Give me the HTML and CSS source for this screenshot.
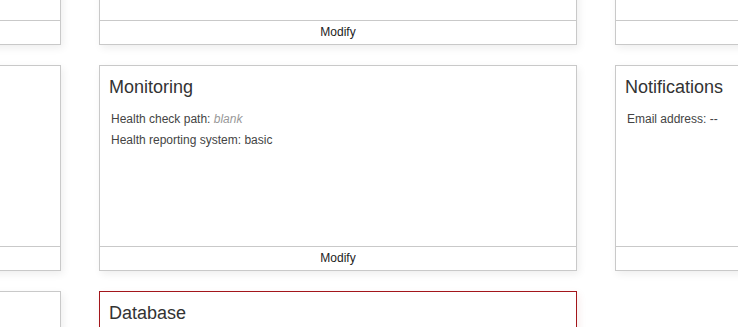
FILE: index.html
```html
<!DOCTYPE html>
<html lang="en">
<head>
  <meta charset="UTF-8" />
  <meta name="viewport" content="width=device-width, initial-scale=1.0"/>
  <title>Configuration</title>
  <link rel="stylesheet" href="styles.css">
</head>
<body>
  <div class="board">
    <!-- row 1 -->
    <div class="card">
      <div class="card-body"></div>
      <div class="card-footer">Modify</div>
    </div>
    <div class="card">
      <div class="card-body"></div>
      <div class="card-footer">Modify</div>
    </div>
    <div class="card">
      <div class="card-body"></div>
      <div class="card-footer">Modify</div>
    </div>

    <!-- row 2 -->
    <div class="card">
      <div class="card-body"></div>
      <div class="card-footer">Modify</div>
    </div>
    <div class="card">
      <div class="card-body">
        <h2>Monitoring</h2>
        <div class="setting">Health check path: <span class="blank">blank</span></div>
        <div class="setting">Health reporting system: basic</div>
      </div>
      <div class="card-footer">Modify</div>
    </div>
    <div class="card">
      <div class="card-body">
        <h2>Notifications</h2>
        <div class="setting">Email address: --</div>
      </div>
      <div class="card-footer">Modify</div>
    </div>

    <!-- row 3 -->
    <div class="card">
      <div class="card-body"></div>
      <div class="card-footer">Modify</div>
    </div>
    <div class="card card-error">
      <div class="card-body">
        <h2>Database</h2>
      </div>
      <div class="card-footer">Modify</div>
    </div>
  </div>
</body>
</html>
```

FILE: styles.css
```css
body {
  margin: 0;
  background-color: #fff;
  font-family: "Helvetica Neue", Helvetica, "Liberation Sans", Arial, sans-serif;
  overflow: hidden;
}
.board {
  display: grid;
  grid-template-columns: repeat(3, 478px);
  grid-auto-rows: 206px;
  column-gap: 38px;
  row-gap: 20px;
  margin-left: -417px;
  margin-top: -161px;
}
.card {
  display: flex;
  flex-direction: column;
  border: 1px solid #c9c9c9;
  background-color: #fff;
  box-shadow: 2px 3px 8px rgba(0,0,0,0.07);
}
.card-error {
  border-color: #a3161b;
  box-shadow: 2px 3px 8px rgba(163,22,27,0.08);
}
.card-body {
  flex: 1;
  padding: 11px 9px 0 9px;
}
.card-body h2 {
  margin: 0 0 12px 0;
  font-size: 18px;
  line-height: 20px;
  font-weight: normal;
  color: #333;
}
.setting {
  padding-left: 2px;
  font-size: 12px;
  line-height: 21px;
  color: #444;
}
.blank {
  font-style: italic;
  color: #999;
}
.card-footer {
  height: 23px;
  line-height: 23px;
  border-top: 1px solid #c9c9c9;
  text-align: center;
  font-size: 12px;
  color: #222;
}
```
